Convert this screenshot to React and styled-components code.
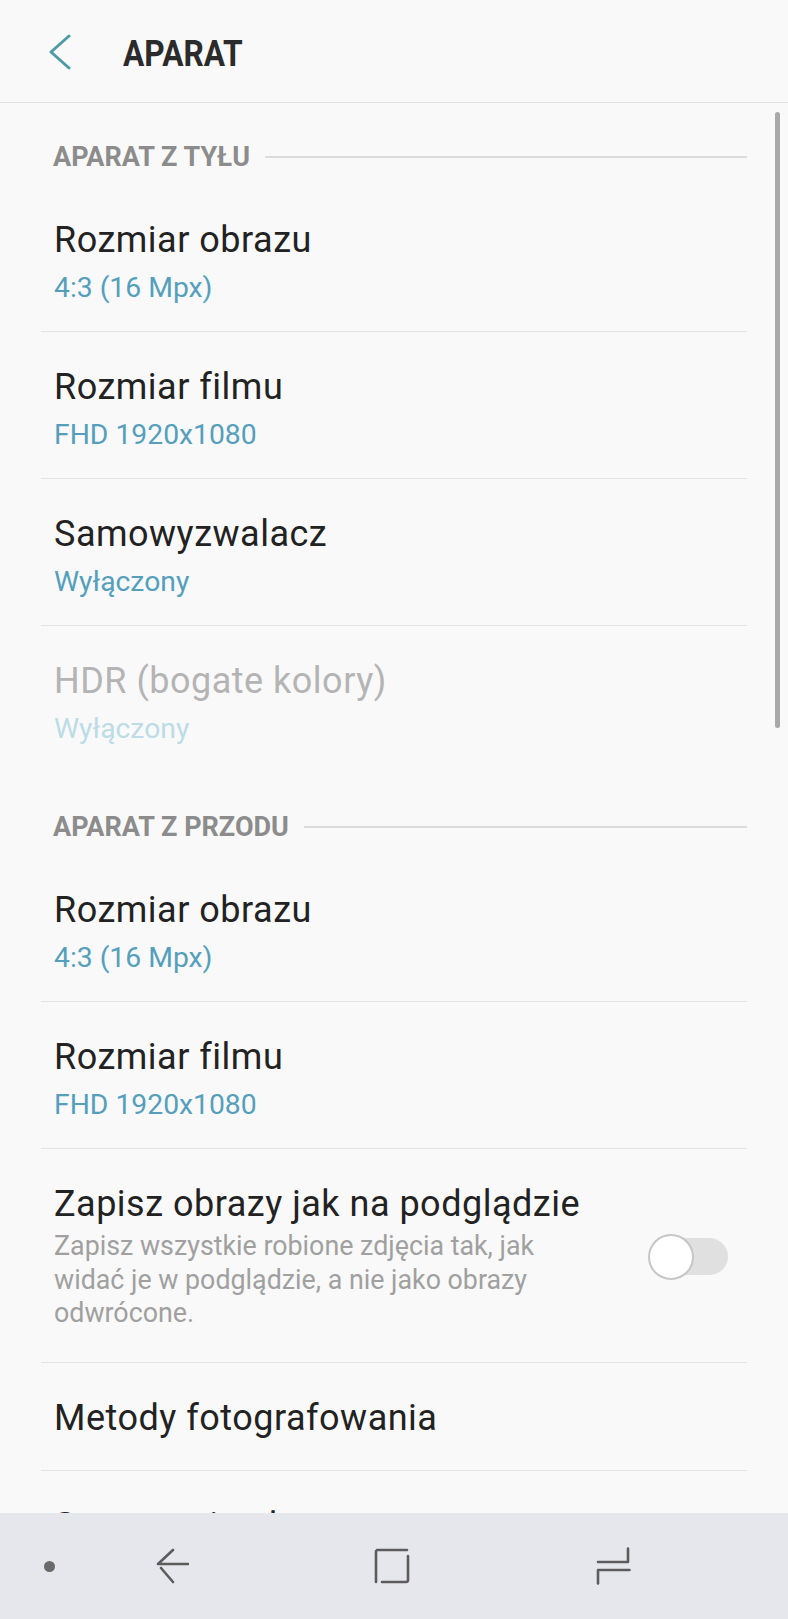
import React from "react";
import styled, { createGlobalStyle } from "styled-components";

const GlobalStyle = createGlobalStyle`
  html, body {
    margin: 0;
    padding: 0;
    background: #f9f9f9;
  }
  body {
    font-family: Roboto, "Liberation Sans", Arial, sans-serif;
  }
  * {
    box-sizing: border-box;
  }
`;

const sections = [
  {
    label: "APARAT Z TYŁU",
    items: [
      { title: "Rozmiar obrazu", value: "4:3 (16 Mpx)" },
      { title: "Rozmiar filmu", value: "FHD 1920x1080" },
      { title: "Samowyzwalacz", value: "Wyłączony" },
      { title: "HDR (bogate kolory)", value: "Wyłączony", disabled: true },
    ],
  },
  {
    label: "APARAT Z PRZODU",
    items: [
      { title: "Rozmiar obrazu", value: "4:3 (16 Mpx)" },
      { title: "Rozmiar filmu", value: "FHD 1920x1080" },
      {
        title: "Zapisz obrazy jak na podglądzie",
        description:
          "Zapisz wszystkie robione zdjęcia tak, jak widać je w podglądzie, a nie jako obrazy odwrócone.",
        toggle: true,
      },
      { title: "Metody fotografowania" },
      { title: "Sterowanie głosem" },
    ],
  },
];

const BackChevron = () => (
  <svg width="24" height="36" viewBox="0 0 24 36" fill="none">
    <path
      d="M21 2 L3 18 L21 34"
      stroke="#4f9aa7"
      strokeWidth="3"
      strokeLinecap="round"
      strokeLinejoin="round"
    />
  </svg>
);

const NavBack = () => (
  <svg width="34" height="36" viewBox="0 0 34 36" fill="none">
    <path
      d="M18 2 L3 16 H33 M6 20 L18 34"
      stroke="#5c5c5c"
      strokeWidth="2.6"
      strokeLinecap="round"
      strokeLinejoin="round"
    />
  </svg>
);

const NavHome = () => (
  <svg width="36" height="36" viewBox="0 0 36 36" fill="none">
    <path
      d="M3 2 H33 M2 3 V34 M34 8 V32 Q34 34 32 34 H8"
      stroke="#5c5c5c"
      strokeWidth="2.6"
      strokeLinecap="round"
    />
  </svg>
);

const NavRecents = () => (
  <svg width="36" height="38" viewBox="0 0 36 38" fill="none">
    <path
      d="M33 1.5 V15 H3 M34.5 23 H3 V36.5"
      stroke="#5c5c5c"
      strokeWidth="2.6"
      strokeLinecap="round"
      strokeLinejoin="round"
    />
  </svg>
);

const SettingRow = ({ item }) => {
  const variant = item.toggle ? "toggle" : item.value ? "value" : "single";
  return (
    <Row $variant={variant}>
      <TextCol>
        <ItemTitle $disabled={item.disabled}>{item.title}</ItemTitle>
        {item.value && <ItemValue $disabled={item.disabled}>{item.value}</ItemValue>}
        {item.description && <ItemDesc>{item.description}</ItemDesc>}
      </TextCol>
      {item.toggle && (
        <Switch>
          <Track />
          <Thumb />
        </Switch>
      )}
    </Row>
  );
};

const App = () => {
  return (
    <>
      <GlobalStyle />
      <Screen>
        <TopBar>
          <BackButton>
            <BackChevron />
          </BackButton>
          <PageTitle>APARAT</PageTitle>
        </TopBar>

        <Content>
          <List>
            {sections.map((section) => (
              <Section key={section.label}>
                <SectionHeader>
                  <SectionLabel>{section.label}</SectionLabel>
                  <SectionRule />
                </SectionHeader>
                <Items>
                  {section.items.map((item, i) => (
                    <SettingRow key={i} item={item} />
                  ))}
                </Items>
              </Section>
            ))}
          </List>
          <Scrollbar />
        </Content>

        <NavBar>
          <NavCell>
            <NavDot />
          </NavCell>
          <NavCell>
            <NavBack />
          </NavCell>
          <NavCell>
            <NavHome />
          </NavCell>
          <NavCell>
            <NavRecents />
          </NavCell>
        </NavBar>
      </Screen>
    </>
  );
};

export default App;

const Screen = styled.div`
  width: 788px;
  height: 1619px;
  display: flex;
  flex-direction: column;
  background: #f9f9f9;
  overflow: hidden;
`;

const TopBar = styled.header`
  height: 103px;
  flex-shrink: 0;
  display: flex;
  align-items: center;
  border-bottom: 1px solid #e2e2e2;
`;

const BackButton = styled.div`
  display: flex;
  margin-left: 48px;
  margin-top: 1px;
`;

const PageTitle = styled.h1`
  margin: 5px 0 0 51px;
  font-size: 36px;
  line-height: 40px;
  font-weight: 700;
  color: #2b2b2b;
  transform: scaleX(0.88);
  transform-origin: left center;
`;

const Content = styled.main`
  flex: 1;
  position: relative;
  overflow: hidden;
`;

const List = styled.div`
  margin: 0 41px;
`;

const Section = styled.section``;

const SectionHeader = styled.div`
  display: flex;
  align-items: center;
  padding: 37px 0 11px 12px;
`;

const SectionLabel = styled.span`
  font-size: 27px;
  line-height: 34px;
  font-weight: 700;
  color: #8c8c8c;
`;

const SectionRule = styled.div`
  flex: 1;
  height: 2px;
  margin-left: 15px;
  background: #dcdcdc;
`;

const Items = styled.div``;

const Row = styled.div`
  display: flex;
  align-items: center;
  padding: 34px 0
    ${(p) => (p.$variant === "single" ? 31 : p.$variant === "toggle" ? 31 : 26)}px 13px;
  border-bottom: 1px solid #e4e4e4;

  &:last-child {
    border-bottom-color: transparent;
  }
`;

const TextCol = styled.div`
  flex: 1;
  min-width: 0;
`;

const ItemTitle = styled.div`
  font-size: 36px;
  line-height: 42px;
  letter-spacing: 0.5px;
  white-space: nowrap;
  color: ${(p) => (p.$disabled ? "#b4b4b4" : "#222222")};
`;

const ItemValue = styled.div`
  margin-top: 10px;
  font-size: 28.3px;
  line-height: 34px;
  color: ${(p) => (p.$disabled ? "#bcdce6" : "#559fbc")};
`;

const ItemDesc = styled.div`
  margin-top: 5px;
  max-width: 525px;
  font-size: 26.8px;
  line-height: 33.5px;
  color: #a0a0a0;
`;

const Switch = styled.div`
  position: relative;
  flex-shrink: 0;
  display: flex;
  align-items: center;
  width: 80px;
  height: 46px;
  margin-right: 19px;
`;

const Track = styled.div`
  width: 76px;
  height: 37px;
  margin-left: 4px;
  border-radius: 19px;
  background: #e0e0e0;
`;

const Thumb = styled.div`
  position: absolute;
  left: 0;
  top: 0;
  width: 46px;
  height: 46px;
  border-radius: 50%;
  background: #ffffff;
  border: 2px solid #c6c6c6;
`;

const Scrollbar = styled.div`
  position: absolute;
  top: 9px;
  right: 8px;
  width: 5px;
  height: 616px;
  border-radius: 3px;
  background: #a9a9a9;
`;

const NavBar = styled.nav`
  height: 106px;
  flex-shrink: 0;
  display: grid;
  grid-template-columns: 98px 148px 292px 150px;
  align-items: center;
  background: #e6e6ed;
`;

const NavCell = styled.div`
  display: flex;
  justify-content: center;
  align-items: center;
`;

const NavDot = styled.div`
  width: 11px;
  height: 11px;
  border-radius: 50%;
  background: #6a6a6a;
`;
